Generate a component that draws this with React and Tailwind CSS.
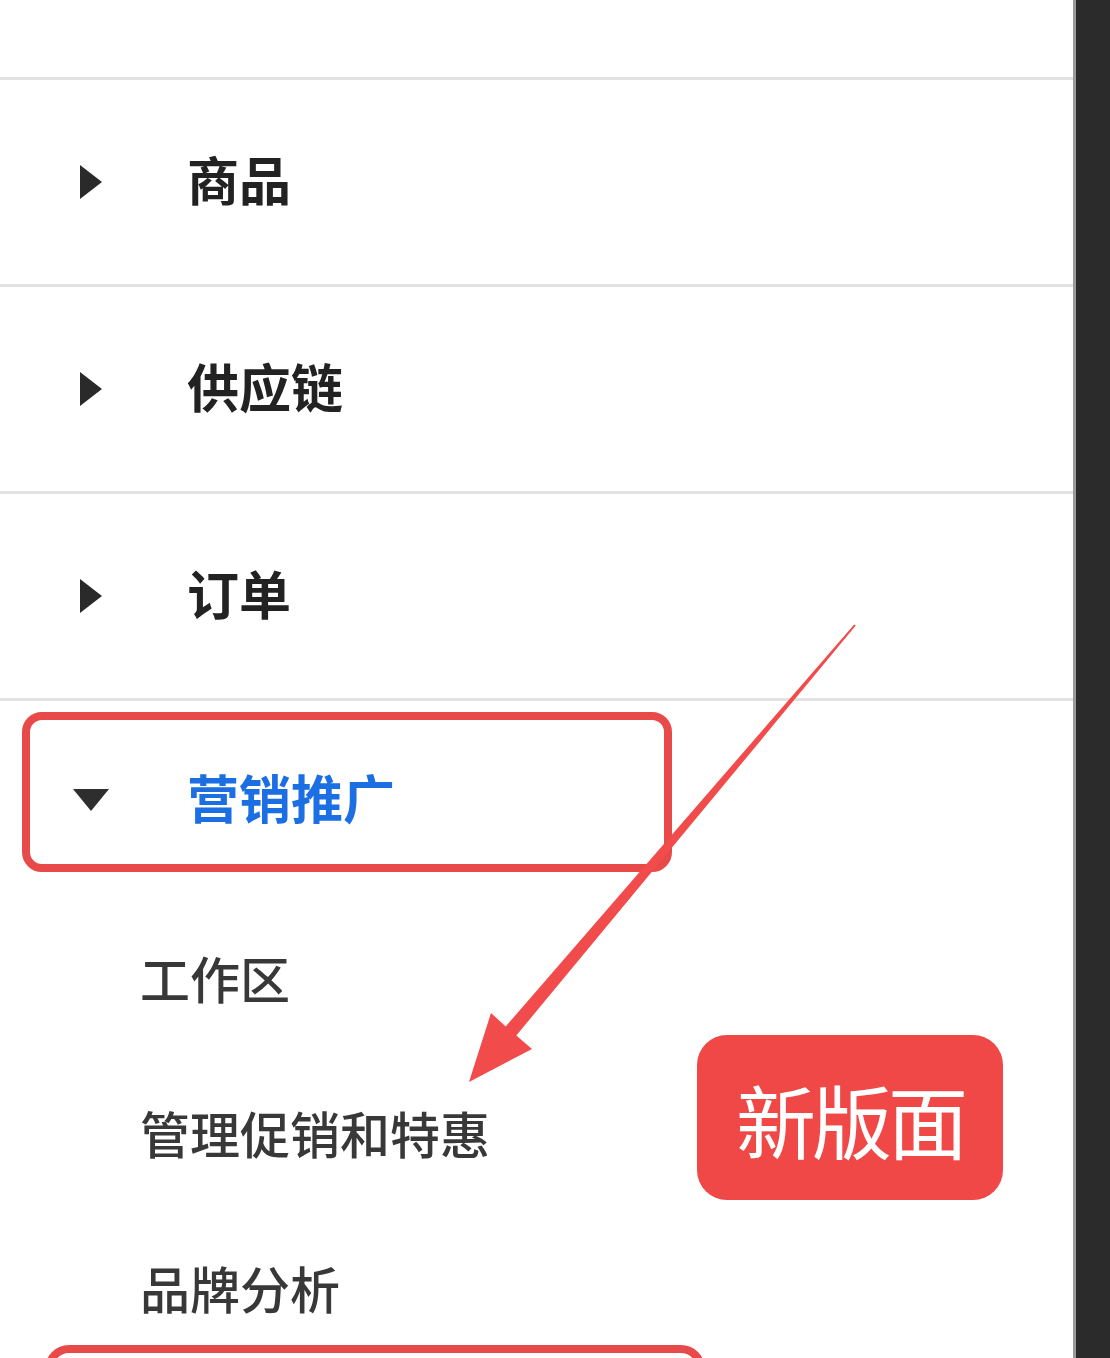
import React from "react";

const FONT = { fontFamily: '"Noto Sans CJK SC", "Noto Sans", sans-serif' };

const RightTri = () => (
  <svg width="24" height="34" viewBox="0 0 24 34" className="shrink-0">
    <polygon points="1,0 23,17 1,34" fill="#2a2a2a" />
  </svg>
);

const DownTri = () => (
  <svg width="36" height="24" viewBox="0 0 36 24" className="shrink-0">
    <polygon points="0,1 36,1 18,23" fill="#2e2e2e" />
  </svg>
);

const Row = ({ label }) => (
  <div className="flex h-[207px] items-center border-b-[3px] border-[#e2e2e4]">
    <div className="flex w-[187px] pl-[79px]">
      <RightTri />
    </div>
    <span className="pb-[6px] text-[52px] font-bold leading-none text-[#222]">{label}</span>
  </div>
);

const SubItem = ({ label }) => (
  <div className="flex h-[100px] items-center pl-[140px] text-[50px] font-medium leading-none text-[#383838]">
    {label}
  </div>
);

export default function App() {
  return (
    <div className="relative flex h-[1358px] w-[1110px] overflow-hidden bg-white" style={FONT}>
      {/* menu panel */}
      <div className="flex-1 border-r-[3px] border-[#9a9a9a] bg-white">
        <div className="h-[80px] border-b-[3px] border-[#e2e2e4]" />
        <Row label="商品" />
        <Row label="供应链" />
        <Row label="订单" />

        <div className="ml-[22px] mt-[11px] flex h-[160px] w-[650px] items-center rounded-[20px] border-[8px] border-[#e84a4a] pt-[16px]">
          <div className="flex w-[157px] pl-[43px]">
            <DownTri />
          </div>
          <span className="pb-[6px] text-[52px] font-bold leading-none text-[#1c6fe3]">营销推广</span>
        </div>

        <div className="mt-[55px] flex flex-col gap-[55px]">
          <SubItem label="工作区" />
          <SubItem label="管理促销和特惠" />
          <SubItem label="品牌分析" />
        </div>

        <div className="ml-[45px] mt-[8px] h-[60px] w-[660px] rounded-t-[24px] border-x-[8px] border-t-[8px] border-[#e84a4a]" />
      </div>

      {/* dark editor strip */}
      <div className="w-[34px] bg-[#2b2b2b]" />

      {/* annotation arrow */}
      <svg className="pointer-events-none absolute inset-0" width="1110" height="1358" viewBox="0 0 1110 1358">
        <polygon
          points="855.8,625.6 516.3,1035.5 532,1049 469,1082 491,1013 505.7,1026.5 854.2,624.4"
          fill="#f24b4b"
        />
      </svg>

      {/* badge */}
      <div className="absolute left-[697px] top-[1035px] flex h-[165px] w-[306px] items-center justify-center rounded-[30px] bg-[#f04846]">
        <span className="text-[80px] font-normal leading-none tracking-[-4px] text-white">新版面</span>
      </div>
    </div>
  );
}
